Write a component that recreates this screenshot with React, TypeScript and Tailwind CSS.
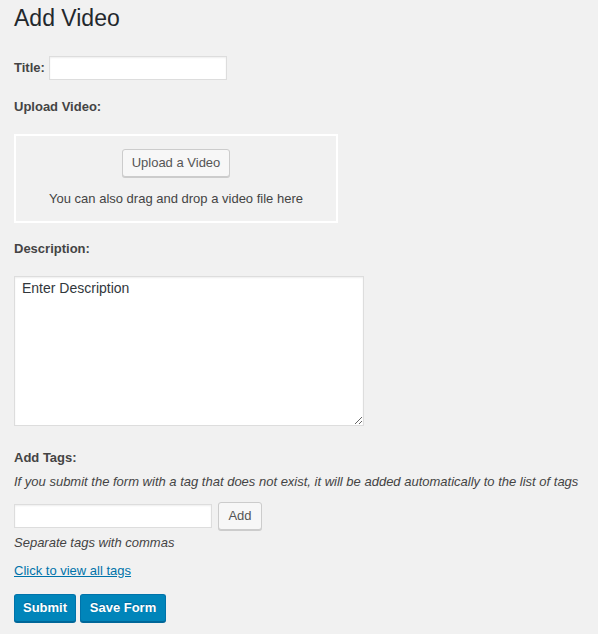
export default function App() {
  return (
    <div className="min-h-[634px] bg-[#f1f1f1] px-[14px] pt-[4px] text-[13px] text-[#444] font-['Liberation_Sans',Arial,sans-serif]">
      <h1 className="text-[23px] leading-[29px] text-[#23282d]">Add Video</h1>

      <div className="mt-[23px] flex h-[24px] items-center gap-[4px]">
        <label className="font-bold">Title:</label>
        <input
          type="text"
          className="h-[24px] w-[178px] border border-[#ddd] bg-white shadow-[inset_0_1px_2px_rgba(0,0,0,0.07)] outline-none"
        />
      </div>

      <div className="mt-[19px] leading-[16px] font-bold">Upload Video:</div>

      <div className="mt-[19px] flex w-[324px] flex-col items-center border-2 border-white pt-[13px] pb-[13px]">
        <button className="h-[28px] w-[108px] rounded-[3px] border border-[#ccc] bg-[#f7f7f7] text-[13px] text-[#555] shadow-[0_1px_0_#ccc]">
          Upload a Video
        </button>
        <p className="mt-[13px] leading-[18px] text-[13px]">You can also drag and drop a video file here</p>
      </div>

      <div className="mt-[18px] leading-[16px] font-bold">Description:</div>

      <textarea
        defaultValue="Enter Description"
        className="mt-[19px] block h-[150px] w-[350px] border border-[#ddd] bg-white px-[7px] py-[1px] text-[14px] leading-[20px] text-[#32373c] shadow-[inset_0_1px_2px_rgba(0,0,0,0.07)] outline-none"
      />

      <div className="mt-[24px] leading-[16px] font-bold">Add Tags:</div>
      <p className="mt-[8px] leading-[16px] italic">
        If you submit the form with a tag that does not exist, it will be added automatically to the list of tags
      </p>

      <div className="mt-[12px] flex h-[28px] items-center gap-[6px]">
        <input
          type="text"
          className="h-[24px] w-[198px] border border-[#ddd] bg-white shadow-[inset_0_1px_2px_rgba(0,0,0,0.07)] outline-none"
        />
        <button className="h-[28px] w-[44px] rounded-[3px] border border-[#ccc] bg-[#f7f7f7] text-[13px] text-[#555] shadow-[0_1px_0_#ccc]">
          Add
        </button>
      </div>

      <p className="mt-[5px] leading-[16px] italic">Separate tags with commas</p>

      <div className="mt-[12px] leading-[16px]">
        <a href="#" className="text-[#0073aa] underline">
          Click to view all tags
        </a>
      </div>

      <div className="mt-[15px] flex gap-[4px]">
        <button className="h-[28px] w-[62px] rounded-[3px] border border-[#0073aa] border-b-[#006799] bg-[#0085ba] text-[13px] font-bold text-white shadow-[0_1px_0_#006799] [text-shadow:0_-1px_1px_#006799]">
          Submit
        </button>
        <button className="h-[28px] w-[86px] rounded-[3px] border border-[#0073aa] border-b-[#006799] bg-[#0085ba] text-[13px] font-bold text-white shadow-[0_1px_0_#006799] [text-shadow:0_-1px_1px_#006799]">
          Save Form
        </button>
      </div>
    </div>
  );
}
